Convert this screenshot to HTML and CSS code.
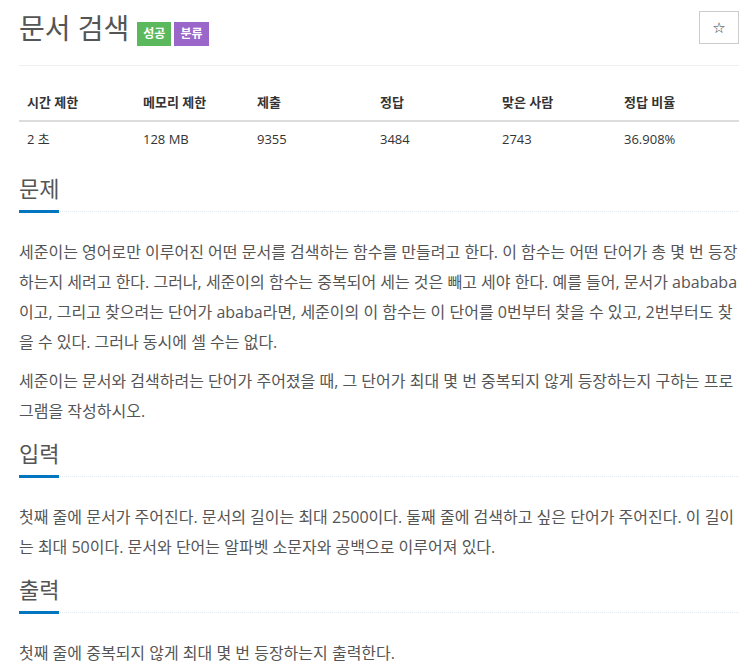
FILE: index.html
```html
<!DOCTYPE html>
<html lang="ko">
<head>
<meta charset="utf-8">
<title>문서 검색</title>
<link rel="stylesheet" href="styles.css">
</head>
<body>
<div class="wrap">
  <div class="page-header">
    <div class="title-row">
      <h1 class="title">문서 검색</h1>
      <div class="labels">
        <span class="label label-success">성공</span>
        <span class="label label-purple">분류</span>
      </div>
    </div>
    <button class="star-btn" type="button">☆</button>
  </div>
  <div class="rule"></div>

  <table class="info">
    <thead>
      <tr>
        <th class="c1">시간 제한</th>
        <th class="c2">메모리 제한</th>
        <th class="c3">제출</th>
        <th class="c4">정답</th>
        <th class="c5">맞은 사람</th>
        <th class="c6">정답 비율</th>
      </tr>
    </thead>
    <tbody>
      <tr>
        <td>2 초</td>
        <td>128 MB</td>
        <td>9355</td>
        <td>3484</td>
        <td>2743</td>
        <td>36.908%</td>
      </tr>
    </tbody>
  </table>

  <section class="section">
    <h2 class="headline"><span>문제</span></h2>
    <div class="text">
      <p>세준이는 영어로만 이루어진 어떤 문서를 검색하는 함수를 만들려고 한다. 이 함수는 어떤 단어가 총 몇 번 등장하는지 세려고 한다. 그러나, 세준이의 함수는 중복되어 세는 것은 빼고 세야 한다. 예를 들어, 문서가 abababa이고, 그리고 찾으려는 단어가 ababa라면, 세준이의 이 함수는 이 단어를 0번부터 찾을 수 있고, 2번부터도 찾을 수 있다. 그러나 동시에 셀 수는 없다.</p>
      <p>세준이는 문서와 검색하려는 단어가 주어졌을 때, 그 단어가 최대 몇 번 중복되지 않게 등장하는지 구하는 프로그램을 작성하시오.</p>
    </div>
  </section>

  <section class="section">
    <h2 class="headline"><span>입력</span></h2>
    <div class="text">
      <p>첫째 줄에 문서가 주어진다. 문서의 길이는 최대 2500이다. 둘째 줄에 검색하고 싶은 단어가 주어진다. 이 길이는 최대 50이다. 문서와 단어는 알파벳 소문자와 공백으로 이루어져 있다.</p>
    </div>
  </section>

  <section class="section">
    <h2 class="headline"><span>출력</span></h2>
    <div class="text">
      <p>첫째 줄에 중복되지 않게 최대 몇 번 등장하는지 출력한다.</p>
    </div>
  </section>
</div>
</body>
</html>
```

FILE: styles.css
```css
html, body {
  margin: 0;
  padding: 0;
  background: #fff;
}

body {
  font-family: "Open Sans", "Noto Sans CJK KR", sans-serif;
  color: #555;
  font-size: 14px;
}

.wrap {
  width: 720px;
  padding: 0 15px 0 19px;
}

.page-header {
  display: flex;
  justify-content: space-between;
  align-items: flex-start;
  padding-top: 8px;
  height: 40px;
}

.title-row {
  display: flex;
  align-items: flex-start;
  gap: 8px;
}

.title {
  margin: 0;
  font-size: 28px;
  font-weight: 400;
  line-height: 40px;
  color: #555;
}

.labels {
  display: flex;
  gap: 3px;
  margin-top: 14px;
}

.label {
  display: inline-block;
  height: 24px;
  line-height: 24px;
  padding: 0 6px;
  font-size: 12px;
  font-weight: 700;
  color: #fff;
}

.label-success {
  background: #5cb85c;
}

.label-purple {
  background: #9b66c9;
}

.star-btn {
  margin-top: 3px;
  width: 40px;
  height: 33px;
  border: 1px solid #ccc;
  background: #fff;
  color: #333;
  font-family: "DejaVu Sans", sans-serif;
  font-size: 15px;
  padding: 0;
}

.rule {
  height: 1px;
  background: #eee;
  margin-top: 17px;
}

.info {
  width: 100%;
  table-layout: fixed;
  border-collapse: collapse;
  margin-top: 19px;
  margin-bottom: 20px;
  font-size: 13px;
  line-height: 1.42857;
  color: #333;
}

.info th {
  text-align: left;
  font-weight: 700;
  padding: 8px;
  border-bottom: 2px solid #ddd;
}

.info td {
  padding: 8px;
}

.c1 { width: 100px; }
.c2 { width: 98px; }
.c3 { width: 107px; }
.c4 { width: 106px; }
.c5 { width: 106px; }
.c6 { width: 107px; }

.section {
  margin-top: 15px;
}

.headline {
  display: flex;
  margin: 0 0 25px;
  font-size: 22px;
  font-weight: 400;
  line-height: 24px;
  color: #555;
  border-bottom: 1px dotted #e4e9f0;
}

.headline span {
  display: block;
  padding-bottom: 10px;
  border-bottom: 3px solid #0076c0;
  margin-bottom: -2px;
}

.text p {
  margin: 0 0 9px;
  font-size: 16px;
  line-height: 30px;
}
```
